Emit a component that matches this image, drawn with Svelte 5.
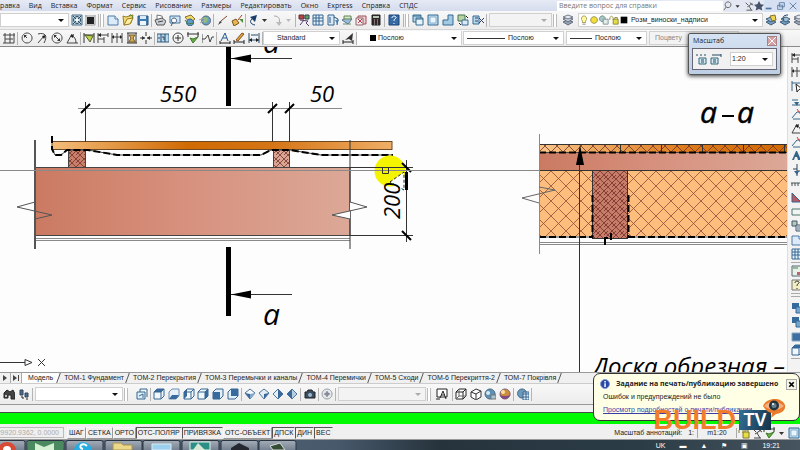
<script lang="ts">
	// each icon is a list of [path, fill, stroke] on a 14x14 grid
	type Shape = [string, string, string?];

	interface Group {
		width: number;
		icons: string[];
		grip?: boolean;
	}

	const cube = 'M2 5l3-3h7v7l-3 3H2z';
	const cubeEdges = 'M2 5h7v7M9 5l3-3';

	const icons: Record<string, Shape[]> = {
		gear: [
			['M2 2h10v10H2z', '#c4dbe8', '#466b84'],
			['M7 3.500a3.500 3.500 0 1 0 .1 0zM3 3l8 8M11 3l-8 8', 'none', '#27475e'],
			['M7 5.500a1.500 1.500 0 1 0 .1 0z', '#fff']
		],
		chip: [
			['M4 4h7v7H4z', '#222'],
			['M2 3h10M2 12h10M3 2v10M12 2v10', 'none', '#999']
		],
		page: [['M2 3h7l3 3v6H2z', '#dcebfa', '#4f7ba8'], ['M9 3v3h3', '#fff', '#4f7ba8']],
		open: [
			['M2 3l3 1 7-2-2 8-7 2z', '#f3dc74', '#9a7c25'],
			['M3 12l3-6 6-1-3 6z', '#fff0a0', '#9a7c25'],
			['M8 3c2-3 3 0 4 2', 'none', '#368344']
		],
		save: [
			['M2 3h10v9H2z', '#3f7cb4', '#29547f'],
			['M4 3h6v3H4z', '#d9eafa'],
			['M4 8h6v4H4z', '#eef5fb']
		],
		print: [
			['M4 2l5 1 1 4H4z', '#fff', '#777'],
			['M2 7l7-2 4 3-2 4H4z', '#cbd0d6', '#555'],
			['M5 9l5-1', 'none', '#444']
		],
		preview: [
			['M2 3h10v7H2z', '#cfe3f5', '#49759e'],
			['M6 5a2.500 2.500 0 1 0 .1 0zM5 9l-2 4', '#fff', '#3d5870']
		],
		publish: [
			['M2 4l6-2 4 4-5 4z', '#f0d86b', '#876f29'],
			['M7 6a3.500 3.500 0 1 0 .1 0z', '#5b9bd0', '#2b5980'],
			['M2 7l3 4 6-1', 'none', '#4d7d31']
		],
		globe: [
			['M8 3a4.500 4.500 0 1 0 .1 0z', '#6c9ec0', '#50687c'],
			['M6 4l4 1-1 4-3 1z', '#91bd78'],
			['M1 7l5-2M2 10l5-3', 'none', '#aaa']
		],
		brush: [['M3 12l2-4 2 1z', '#333'], ['M6 8l6-5', 'none', '#83462c']],
		match: [
			['M2 8l4-2 3 4-5 3z', '#e9b64e', '#78541c'],
			['M8 7l4-5', 'none', '#a33e2a'],
			['M9 6h4v4z', '#4f8e3b']
		],
		undo: [['M9 12C4 11 3 8 7 5', 'none', '#183c6b'], ['M4 4l7-2-2 7z', '#183c6b']],
		redo: [['M4 3c6 0 6 4 5 8', 'none', '#aaa'], ['M6 9h6l-3 4z', '#bbb']],
		caret: [['M4 6h5L6.500 9z', '#333']],
		caretOff: [['M4 6h5L6.500 9z', '#bbb']],
		palette: [
			['M2 2h5v4H2z', '#b84545', '#5d3030'],
			['M8 2h4v4H8z', '#5aa05e', '#345'],
			['M3 7l8 1-2 2 3 3M3 12l4-5', 'none', '#573d72']
		],
		table: [
			['M2 2h10v10H2z', '#e4f1fb', '#376791'],
			['M2 5h10M2 8h10M5 2v10M8 2v10', 'none', '#376791']
		],
		tool: [
			['M2 2h6v10H2z', '#d8e9f7', '#376791'],
			['M4 4v6M8 4l4 2-1 6', 'none', '#2b527d'],
			['M9 7h4l-2 4z', '#4c86b8']
		],
		sheets: [
			['M2 7l6-3 4 2-4 5z', '#9dbdd6', '#567893'],
			['M4 3h7v3H4z', '#d5e8c6', '#64815a'],
			['M3 11h8', 'none', '#698a73']
		],
		markup: [
			['M4 3h8v8H4z', '#ead1d4', '#a44c56'],
			['M2 5h7v7H2z', '#f3e7e8', '#8c6870'],
			['M4 6l4 4M8 6l-4 4', 'none', '#c23d48']
		],
		calc: [
			['M3 2h8v10H3z', '#302829', '#222'],
			['M4 3h6v2H4z', '#b9c5b5'],
			['M5 7h1M8 7h1M5 9h1M8 9h1M5 11h1M8 11h1', 'none', '#d9bebe']
		],
		help: [
			['M2 2h10v10H2z', '#366ca5', '#1c4375'],
			['M5 5c0-3 5-2 4 0-1 1-2 1-2 3M7 10v1', 'none', '#fff']
		],
		vp1: [
			['M2 2h8v7H2z', '#b7d6ea', '#376b90'],
			['M5 5h7v7H5z', '#e6f3fb', '#376b90'],
			['M2 3h8M5 6h7', 'none', '#376b90']
		],
		vp2: [['M2 2h10v10H2z', '#b9d9ed', '#376b90'], ['M4 4h6v6H4z', '#eaf6fd', '#8cb4cf']],
		vp3: [['M7 2h5v10H2V7h5z', '#a2cae4', '#376b90']],
		vp4: [
			['M2 2h7v6H2z', '#b8d4a2', '#47734f'],
			['M6 7h6v5H6z', '#d9eaf7', '#376b90'],
			['M10 3l2 2M3 10l2 2', 'none', '#222']
		],
		vp5: [
			['M2 3h6v8H2z', '#b9d9ed', '#376b90'],
			['M8 5l5 5M13 5l-5 5M4 5h3M4 8h3', 'none', '#343e61']
		],
		layers: [
			['M2 9l5-2 5 2-5 3z', '#9ba5b5', '#606a7a'],
			['M2 6l5-2 5 2-5 3z', '#c5ccd8', '#606a7a'],
			['M2 4l5-2 5 2-5 2z', '#e4e7ef', '#747d8c']
		],
		layers2: [
			['M2 9l5-2 5 2-5 3z', '#739ec2', '#405e7b'],
			['M2 6l5-2 5 2-5 3z', '#8db7d6', '#405e7b'],
			['M6 3l5-1 1 5-4 1z', '#edd253', '#82712e']
		],
		layers3: [
			['M2 9l5-2 5 2-5 3z', '#6c9aba', '#405e7b'],
			['M3 6l5-2 4 2-4 3z', '#a1c1d7', '#405e7b'],
			['M10 2c-5 0-6 3-4 5', 'none', '#173f70']
		],
		bulb: [['M7 2a3.500 3.500 0 0 0-2 6v2h4V8a3.500 3.500 0 0 0-2-6z', '#fff9a5', '#9a954d'], ['M5 12h4', 'none', '#777']],
		sun: [['M7 3a4 4 0 1 0 .1 0z', '#f2df3c', '#8b823c']],
		freeze: [['M5 2a3.500 3.500 0 1 0 .1 0z', '#a9c6c4', '#688984'], ['M6 6h6v6H6z', '#e5eceb', '#718b86']],
		lock: [['M6 6h6v6H6z', '#e5dd44', '#80792d'], ['M2 7V4q2-3 4 0v3M8 6V4h3v2', 'none', '#8a822f']],
		black: [['M3 3h8v8H3z', '#000']],
		scaleA: [
			['M4 6h7v6H4z', '#d7eaf1', '#35697f'],
			['M1 3h2M5 3h2M9 3h2M6 8h3M6 10h3', 'none', '#254b60']
		],
		scaleB: [
			['M2 6h7v6H2z', '#d7eaf1', '#35697f'],
			['M3 3h9M12 2v3M4 8h3M4 10h3', 'none', '#254b60']
		],
		dimGrid: [['M1 4h12M3 2v10M8 2v10M12 2v10M3 8h8M1 12h11', 'none', '#444']],
		radius: [['M7 2a5 5 0 1 0 .1 0zM7 7L4 4', 'none', '#444'], ['M4 4h3L4 7z', '#333']],
		arc: [['M3 3c7-2 10 2 6 9M3 12l6-7', 'none', '#444'], ['M7 5l4-1-2 4z', '#222']],
		diam: [['M7 2a5 5 0 1 0 .1 0zM4 4l6 6', 'none', '#444'], ['M4 4h3L4 7zM10 10H7l3-3z', '#333']],
		angle: [['M2 12h11M2 12l5-9M6 4q5 2 5 8', 'none', '#444'], ['M5 5l4-2-1 4z', '#222']],
		quick: [
			['M2 2v10M12 2v10M2 4h10', 'none', '#333'],
			['M3 4l8 1-3 6z', '#c2d14b', '#4c6329']
		],
		base: [['M2 2v10M2 4h10M2 8h6M8 6v6M12 2v4', 'none', '#444'], ['M2 4l3-2v4z', '#222']],
		cont: [['M2 2v10M7 2v10M12 2v10M2 6h10', 'none', '#444'], ['M2 6l2-2v4zM12 6l-2-2v4z', '#222']],
		space: [
			['M2 2h10M2 12h10M3 2v10M11 2v10', 'none', '#333'],
			['M4 4h6l-2 3 2 4H4l2-4z', '#d5ad58', '#755422']
		],
		brk: [['M1 7h5M8 7h5M7 1v4M7 9v4', 'none', '#333'], ['M3 5v4l3-2zM11 5v4L8 7z', '#333']],
		tol: [['M1 3h12v8H1z', '#bddaec', '#335f80'], ['M5 3v8M9 3v8M2 7h2M6 6h2v3', 'none', '#254b69']],
		center: [['M7 2a5 5 0 1 0 .1 0zM4 7h6M7 4v6', 'none', '#333']],
		inspect: [['M1 3h12M2 1v5M12 1v5', 'none', '#333'], ['M4 7l3 5 5-6-5 2z', '#69ae42', '#3e7a2b']],
		jog: [['M1 3v9M1 8h3l3-4 2 7 2-5h2', 'none', '#444']],
		dimText: [['M2 12h10M2 10v4M12 10v4', 'none', '#222'], ['M3 10l4-8 3 8M5 7h4', 'none', '#245a91']],
		dimEdit: [['M2 11h10M2 9v4M12 9v4', 'none', '#222'], ['M4 9l6-7 2 1-6 7z', '#d5a642', '#92501b']],
		dimUpd: [['M2 2v10M12 2v10M2 9h10M4 4h7', 'none', '#274d6d'], ['M2 9l3-2v4zM12 9L9 7v4z', '#222']],
		dimPick: [['M2 2v10M2 4h10M12 2v4', 'none', '#32668a'], ['M6 5l6 5-3 .5L7 13z', '#fff', '#222']],
		style: [['M2 11h10M2 9v4M12 9v4', 'none', '#222'], ['M4 9l8-7-1 8-3-2z', '#333']],
		binoc: [['M2 11V6l3-3 3 2 3-2 2 4v5H9V8H6v3z', '#444', '#222'], ['M3 8h2v2H3z', '#bbb']],
		steps: [['M3 3h3v5H3zM8 6h3v4H8z', '#456f91', '#345'], ['M4 10h2v2M9 12h2', 'none', '#222']],
		named: [['M2 5h8v7H2z', '#dfeef9', '#376791'], ['M5 2h7v8M5 5V2M4 9l4-2v4', 'none', '#376791']],
		top: [[cube, '#f1f7fc', '#376791'], ['M2 5l3-3h7L9 5z', '#376b9d'], [cubeEdges, 'none', '#376791']],
		bottom: [[cube, '#e6f0f8', '#6f8fae'], ['M2 12l3-4h7l-3 4z', '#376b9d']],
		left: [[cube, '#f1f7fc', '#376791'], ['M2 5l3-3v7l-3 3z', '#376b9d'], [cubeEdges, 'none', '#376791']],
		right: [[cube, '#f1f7fc', '#376791'], ['M9 5l3-3v7l-3 3z', '#376b9d'], [cubeEdges, 'none', '#376791']],
		front: [[cube, '#e4f0f9', '#376791'], ['M2 5h7v7H2z', '#376b9d']],
		back: [[cube, '#e4f0f9', '#376791'], ['M5 2h7v7H5z', '#376b9d']],
		iso1: [['M7 2l5 4-5 6-5-6z', '#f4f8fc', '#527798'], ['M2 6l5 1v5z', '#39699a'], ['M7 7l5-1-5 6z', '#84a9c9']],
		iso2: [['M7 2l5 4-5 6-5-6z', '#e4eef7', '#527798'], ['M7 7l5-1-5 6z', '#39699a']],
		iso3: [['M7 2l5 5-5 5-5-5z', '#e4eef7', '#527798'], ['M7 2l5 5-5 5z', '#39699a']],
		iso4: [['M7 2l5 5-5 5-5-5z', '#b4cde2', '#527798'], ['M7 2L2 7l5 5z', '#39699a']],
		camera: [['M2 5h2l1-2h4l1 2h2v6H2z', '#384e65', '#222'], ['M7 6a2 2 0 1 0 .1 0z', '#9fb6c8']],
		orbit: [['M7 2a5 5 0 1 0 .1 0z', '#e5e9ec', '#929ca3'], ['M4 7h6M7 4v6', 'none', '#667'], ['M7 5a2 2 0 1 0 .1 0z', '#889']],
		wire2d: [['M2 2h10v8H2z', '#fff', '#222'], ['M5 11l3-7 3 8M6 8h4M1 12h4', 'none', '#222']],
		wire: [[cube, '#fff', '#222'], [cubeEdges, 'none', '#222'], ['M2 12l3-3h7M5 9V2', 'none', '#666']],
		hidden: [['M2 5l5-3 5 2v6l-5 3-5-3z', '#fff', '#333'], ['M2 5l5 2v5M7 7l5-3', 'none', '#333']],
		real: [['M7 2a5 5 0 1 0 .1 0z', '#5f91b5', '#426782'], ['M5 4a2 2 0 1 0 .1 0z', '#d5e9f4'], ['M8 8h5v4H8z', '#a9c4d3', '#777']],
		ball: [['M7 2a5 5 0 1 0 .1 0z', '#ce8e3d', '#785b73'], ['M2 8q5 2 10 0-2 4-5 4-4 0-5-4z', '#824a83'], ['M5 3a2 2 0 1 0 .1 0z', '#ffe0a0']],
		vstyle: [['M6 2a4.500 4.500 0 1 0 .1 0z', '#6b9abc', '#426782'], ['M7 5h6v8H7z', '#e1edf6', '#376791'], ['M7 7h6M7 10h6M10 5v8', 'none', '#376791']],
		find: [['M7 2a3.500 3.500 0 1 0 .1 0zM5 8l-3 4', 'none', '#555']],
		sat: [['M3 3l3 3M8 3l4 3M5 8l6-4M7 7l3 5M4 12h7', 'none', '#444']],
		star: [['M7 1l2 4 4 .5-3 3 1 4-4-2-4 2 1-4-3-3L5 5z', '#46536a']],
		min: [['M3 9h7v2H3z', '#53749b']],
		restore: [['M5 3h6v5H5zM3 6h6v5H3z', 'none', '#53749b']],
		close: [['M3 3l8 8M11 3l-8 8', 'none', '#53749b']],
		leader: [['M2 12h9M11 12V3M2 7h6', 'none', '#32668a'], ['M4 9h5l-2 4z', '#32668a']],
		red: [['M2 11l5-6h5M3 12h8', 'none', '#32668a'], ['M7 2l4 6', 'none', '#cc4040']],
		letter: [['M2 11l4-9h1l4 9H8L7 8H5l-1 3z', '#346488'], ['M10 12h3', 'none', '#222']],
		pin: [['M7 1v12M3 6h4M7 8h4', 'none', '#345'], ['M4 8h5l-2 4z', '#346488']],
		ruler: [['M1 6h12M2 6v3M5 6v3M8 6v3M11 6v3', 'none', '#455']],
		wedge: [['M2 2l9 9H2z', '#ba5966', '#346488']],
		rect: [['M2 4h11v6H2z', '#f0f5f4', '#4c776d']],
		shapes: [['M2 2h5v5H2z', '#b3c9bc', '#456'], ['M6 6h7v6H6z', '#d9e8ef', '#456'], ['M7 8h5M7 10h5', 'none', '#678']],
		note: [['M2 2h10v10H2z', '#e8f0e7', '#567'], ['M3 4h5', 'none', '#3d8550'], ['M7 8h5v3H7z', '#b46673']],
		ask: [['M2 2h10v10H2z', '#f3efc4', '#777'], ['M5 5c0-3 5-2 4 0-1 1-2 1-2 3M7 10v1', 'none', '#333']],
		order: [['M2 2h7v6H2z', '#356b9b'], ['M6 6h7v6H6z', '#77a4ca', '#356b9b']],
		order2: [['M2 4h10v8H2z', '#3d6fa3', '#88a6c0']]
	};

	const menu = ['Правка', 'Вид', 'Вставка', 'Формат', 'Сервис', 'Рисование', 'Размеры', 'Редактировать', 'Окно', 'Express', 'Справка', 'СПДС'];

	const standard: Group[] = [
		{ width: 30, icons: ['gear', 'chip'] },
		{ width: 53, icons: ['page', 'open', 'save'], grip: true },
		{ width: 62, icons: ['print', 'preview', 'publish', 'globe'] },
		{ width: 32, icons: ['brush', 'match'] },
		{ width: 50, icons: ['undo', 'caret', 'redo', 'caretOff'] },
		{ width: 89, icons: ['palette', 'table', 'tool', 'sheets', 'markup', 'calc'] },
		{ width: 19, icons: ['help'] },
		{ width: 83, icons: ['vp1', 'vp2', 'vp3', 'vp4', 'vp5'], grip: true }
	];

	const dims: Group[] = [
		{ width: 18, icons: ['dimGrid'] },
		{ width: 63, icons: ['radius', 'arc', 'diam', 'angle'] },
		{ width: 74, icons: ['quick', 'base', 'cont', 'space', 'brk'] },
		{ width: 62, icons: ['tol', 'center', 'inspect', 'jog'] },
		{ width: 46, icons: ['dimText', 'dimEdit', 'dimUpd'] }
	];

	const views: Group[] = [
		{ width: 18, icons: ['named'] },
		{ width: 91, icons: ['top', 'bottom', 'left', 'right', 'front', 'back'] },
		{ width: 59, icons: ['iso1', 'iso2', 'iso3', 'iso4'] },
		{ width: 18, icons: ['camera'] },
		{ width: 17, icons: ['orbit'] }
	];

	const visual: Group[] = [
		{ width: 27, icons: ['wire2d'], grip: true },
		{ width: 61, icons: ['wire', 'hidden', 'real', 'ball'] },
		{ width: 18, icons: ['vstyle'] }
	];

	const rail = [
		['base', 'cont', 'dimPick', 'leader', 'red', 'angle', 'red', 'letter', 'pin', 'ruler', 'wedge', 'rect', 'shapes', 'page', 'table'],
		['note', 'ask'],
		['order', 'order', 'order2', 'top']
	];

	const sheets = ['Модель', 'ТОМ-1 Фундамент', 'ТОМ-2 Перекрытия', 'ТОМ-3 Перемычки и каналы', 'ТОМ-4 Перемички', 'ТОМ-5 Сходи', 'ТОМ-6 Перекриття-2', 'ТОМ-7 Покрівля'];

	let modes = $state([
		{ name: 'ШАГ', on: false },
		{ name: 'СЕТКА', on: false },
		{ name: 'ОРТО', on: false },
		{ name: 'ОТС-ПОЛЯР', on: true },
		{ name: 'ПРИВЯЗКА', on: true },
		{ name: 'ОТС-ОБЪЕКТ', on: false },
		{ name: 'ДПСК', on: true },
		{ name: 'ДИН', on: true },
		{ name: 'ВЕС', on: true }
	]);

	let sheet = $state('Модель');
</script>

{#snippet icon(name: string)}
	<svg class="icon" viewBox="1 1 12 12" aria-hidden="true">
		{#each icons[name] as [d, fill, stroke]}
			<path {d} {fill} stroke={stroke ?? 'none'} />
		{/each}
	</svg>
{/snippet}

{#snippet group(g: Group)}
	<div class={['group', g.grip && 'grip']} style:width="{g.width}px">
		{#each g.icons as name}
			<button class="tool" aria-label={name}>{@render icon(name)}</button>
		{/each}
	</div>
{/snippet}

<div class="app">
	<nav class="menubar">
		<div class="menu">
			{#each menu as item}
				<button>{item}</button>
			{/each}
		</div>
		<input class="ask" aria-label="Справка" placeholder="Введите вопрос для справки" />
		<div class="menu-tools">
			{#each ['find', 'caret', 'sat', 'star'] as name}
				<button class="tool" aria-label={name}>{@render icon(name)}</button>
			{/each}
		</div>
		<div class="win-tools">
			{#each ['min', 'restore', 'close'] as name}
				<button class="tool" aria-label={name}>{@render icon(name)}</button>
			{/each}
		</div>
	</nav>

	<div class="toolbar upper">
		<label class="combo workspace"><select aria-label="Рабочее пространство"><option></option></select></label>
		{#each standard as g}
			{@render group(g)}
		{/each}
		<label class="combo off view"><select aria-label="Вид" disabled><option></option></select></label>
		<div class="group grip layer-btn">
			<button class="tool" aria-label="Слои">{@render icon('layers')}</button>
		</div>
		<label class="combo layer">
			{#each ['bulb', 'sun', 'freeze', 'lock', 'black'] as name}
				{@render icon(name)}
			{/each}
			<select aria-label="Слой"><option>Розм_виноски_надписи</option></select>
		</label>
		<div class="group last">
			{#each ['layers2', 'layers3', 'layers'] as name}
				<button class="tool" aria-label={name}>{@render icon(name)}</button>
			{/each}
		</div>
	</div>

	<div class="toolbar lower">
		{#each dims as g}
			{@render group(g)}
		{/each}
		<label class="combo dimstyle"><select aria-label="Размерный стиль"><option>Standard</option></select></label>
		<div class="group style-btn"><button class="tool" aria-label="Стиль">{@render icon('style')}</button></div>
		<label class="combo grip color">
			<span class="swatch"></span>
			<select aria-label="Цвет"><option>Послою</option></select>
		</label>
		<label class="combo linetype">
			<span class="line long"></span>
			<select aria-label="Тип линии"><option>Послою</option></select>
		</label>
		<label class="combo weight">
			<span class="line"></span>
			<select aria-label="Вес линии"><option>Послою</option></select>
		</label>
		<label class="combo off plot"><select aria-label="Стиль печати" disabled><option>Поцвету</option></select></label>
	</div>

	<main class="work">
		<svg class="drawing" viewBox="0 47 787 325" role="img" aria-label="Чертеж">
			<defs>
				<linearGradient id="board">
					<stop offset="0" stop-color="#f4bd7c" />
					<stop offset="0.4" stop-color="#d06a03" />
					<stop offset="0.65" stop-color="#d57516" />
					<stop offset="1" stop-color="#efae66" />
				</linearGradient>
				<linearGradient id="cladding">
					<stop offset="0" stop-color="#f8c58a" />
					<stop offset="0.6" stop-color="#dc7a1c" />
					<stop offset="1" stop-color="#d06a03" />
				</linearGradient>
				<linearGradient id="beam">
					<stop offset="0" stop-color="#cb7a62" />
					<stop offset="0.5" stop-color="#d7927f" />
					<stop offset="1" stop-color="#dca897" />
				</linearGradient>
				<pattern id="insul" width="15" height="15" x="551" y="171" patternUnits="userSpaceOnUse">
					<path d="M0 0l15 15M15 0L0 15" stroke="#8d4b36" stroke-width="0.800" />
				</pattern>
				<pattern id="wood" width="8" height="8" x="592" y="171" patternUnits="userSpaceOnUse">
					<path d="M0 0l8 8M8 0L0 8M4 8l4-4" stroke="#743229" stroke-width="0.800" />
				</pattern>
				<pattern id="planks" width="12" height="8" x="539" y="144" patternUnits="userSpaceOnUse">
					<path d="M0 8l8-8M4 0l8 8" stroke="#743229" stroke-width="0.800" />
				</pattern>
			</defs>

			<!-- section marks -->
			<path d="M226 47h5v59h-5zM226 247h5v69h-5z" />
			<path class="thin" d="M231 58.500h61M231 294.500h61" />
			<path d="M231 58.500l20-4v8zM231 294.500l20-4v8z" />
			<text class="mark" x="263" y="53">а</text>
			<text class="mark" x="263" y="325">а</text>

			<!-- roof board and membrane -->
			<rect x="52" y="141.500" width="340" height="8" fill="url(#board)" stroke="#6d4a22" />
			<rect x="68.500" y="149.500" width="17" height="18" fill="#c97e69" />
			<rect x="68.500" y="149.500" width="17" height="18" fill="url(#wood)" stroke="#444" />
			<rect x="273.500" y="149.500" width="16" height="18" fill="#dba595" />
			<rect x="273.500" y="149.500" width="16" height="18" fill="url(#wood)" stroke="#444" />
			<path class="film" d="M52 149l3 6h6l6-5h21l29 5h144l10-5h19l31 5h72" />
			<path class="film-dash" d="M52 136v13l3 6h6l6-5h21l29 5h144l10-5h19l31 5h72" />

			<!-- beam -->
			<rect x="35" y="167.500" width="315" height="68" fill="url(#beam)" stroke="#444" />
			<path class="soft" d="M35 238.500h315M35 240.500h315" />
			<path class="soft wide" d="M35 140v109" />
			<path class="thin" d="M350 140v109" />
			<path class="break" fill="none" d="M35 202l-18 5 35 8-17 4" />
			<path class="break" fill="#fff" d="M350 202l17 5-35 8 18 4" />

			<!-- dimensions -->
			<path class="soft" d="M78 108.500h264" />
			<path class="thin" d="M85.500 102v40M272.500 102v40M289.500 102v40" />
			<path class="tick" d="M81 113l9-9M268 113l9-9M285 113l9-9" />
			<text x="160" y="102">550</text>
			<text x="310" y="102">50</text>

			<circle cx="390" cy="171" r="15.500" fill="#f4f400" />
			<path class="thin" d="M350 167.500h63M350 235.500h63M406.500 160v82" />
			<path class="tick" d="M402 163l9 9M402 231l9 9" />
			<path d="M405 172h3v18h-3z" />
			<path d="M390 182l14-10v18z" fill="#fff" stroke="#222" stroke-dasharray="3 2" />
			<text transform="translate(400 219) rotate(-90)">200</text>

			<!-- section a-a -->
			<text class="mark bold" x="700" y="123">а</text>
			<path d="M722 115h12v2h-12z" />
			<text class="mark bold" x="737" y="123">а</text>
			<rect x="539" y="144" width="248" height="8" fill="url(#cladding)" />
			<rect x="539" y="144" width="248" height="8" fill="url(#planks)" />
			<rect x="539" y="153" width="248" height="18" fill="url(#beam)" />
			<rect x="539" y="171" width="248" height="65" fill="#fdbd7c" />
			<rect x="539" y="171" width="248" height="65" fill="url(#insul)" />
			<rect x="592.500" y="170.500" width="35" height="68" fill="#c77c69" />
			<rect x="592.500" y="170.500" width="35" height="68" fill="url(#wood)" stroke="#333" />
			<path class="thin" d="M539 144.500h248M539 170.500h248M620.500 144v8M661.500 144v8M702.500 144v8M743.500 144v8M784.500 144v8" />
			<path class="film" d="M539 152.500h248M539 237h54M628 237h159" />
			<path class="film-dash" d="M539 152.500h248M539 237h54M628 237h159M592.500 195v43M628.500 195v43" />
			<path class="soft" d="M539 242.500h248M539 244.500h248M539.500 134v120" />
			<path class="hair" d="M539 187l16 3-33 8 17 5" fill="none" />
			<path class="tick" d="M605 237v8M604 238h4M611 233v7" />
			<path class="thin" d="M579.500 160v212" />
			<path d="M580 145l4 20h-8z" />
			<text class="note" x="593" y="375">Доска обрезная –</text>

			<!-- crosshair and ucs -->
			<path class="soft" d="M0 170.500h539" />
			<path class="thin" fill="none" d="M382.500 167.500h6v6h-6zM0 362.500h25M25 359.500v6l7-3zM38 359l7 7M45 359l-7 7" />
		</svg>
		<aside class="rail">
			{#each rail as part}
				<div class="rail-group">
					{#each part as name}
						<button class="tool" aria-label={name}>{@render icon(name)}</button>
					{/each}
				</div>
			{/each}
		</aside>
	</main>

	<div class="sheets">
		<button class="step" aria-label="Вперед"><svg viewBox="0 0 8 8"><path d="M2 1l4 3-4 3z" /></svg></button>
		<button class="step" aria-label="В конец"><svg viewBox="0 0 8 8"><path d="M1 1l4 3-4 3zM6 1h1v6H6z" /></svg></button>
		{#each sheets as name}
			<button class={['sheet', sheet === name && 'active']} onclick={() => (sheet = name)}>{name}</button>
		{/each}
	</div>

	<div class="toolbar bottom">
		<div class="group walk">
			<button class="tool" aria-label="Обзор">{@render icon('binoc')}</button>
			<button class="tool" aria-label="Обход">{@render icon('steps')}</button>
		</div>
		<label class="combo named"><select aria-label="Именованный вид"><option></option></select></label>
		<div class="group grip empty"></div>
		{#each views as g}
			{@render group(g)}
		{/each}
		<label class="combo off camera"><select aria-label="Камера" disabled><option></option></select></label>
		{#each visual as g}
			{@render group(g)}
		{/each}
	</div>

	<div class="command"></div>

	<footer class="status">
		<output class="coords">29920.9362, 0.0000</output>
		{#each modes as mode}
			<button class={['mode', mode.on && 'on']} onclick={() => (mode.on = !mode.on)}>{mode.name}</button>
		{/each}
		<span class="scale-label">Масштаб аннотаций: &nbsp; 1:</span>
		<button class="scale">m1:20</button>
		<div class="tray">
			{#each ['lock', 'sat', 'inspect', 'caret', 'vp2'] as name}
				<button class="tool" aria-label={name}>{@render icon(name)}</button>
			{/each}
		</div>
	</footer>

	<div class="taskbar">
		<svg class="tasks" viewBox="0 0 297 10" aria-hidden="true">
			<defs>
				<linearGradient id="task" x2="0" y2="1">
					<stop offset="0" stop-color="#a4adb8" />
					<stop offset="1" stop-color="#6b7888" />
				</linearGradient>
			</defs>
			{#each [-12, 27, 66, 105, 143, 182, 221, 259] as x}
				<rect {x} y="0.500" width="37" height="12" rx="2" fill="url(#task)" stroke="#2a3440" />
			{/each}
			<rect x="28" y="1" width="35" height="9" fill="#4b8a61" />
			<path d="M-2 10a9 8 0 0 1 18 0z" fill="#d64a36" />
			<path d="M3 10a4 4 0 0 1 8 0z" fill="#fff" />
			<path d="M35 3l9 4 10-4v7H35z" fill="#d5f0d3" />
			<circle cx="83" cy="11" r="9" fill="#22aee4" />
			<path d="M87 6q-3-3-6-1-2 3 2 4" fill="none" stroke="#fff" stroke-width="2" />
			<path d="M113 3h8l2 2h9v5h-19z" fill="#ecd889" stroke="#a99451" />
			<path d="M152 4h19v6h-19z" fill="#9bd0ef" stroke="#dcebf3" />
			<path d="M190 2h20v8h-20z" fill="#2a9087" stroke="#e5efe9" />
			<path d="M198 3l-5 7h12z" fill="#d7e6d5" />
			<path d="M231 8l8-5 10 5v2h-18z" fill="#25292f" />
			<path d="M270 6l10-3 5 7h-12z" fill="#354c37" stroke="#dadada" />
		</svg>
		<div class="clock"><span>UK</span><span>▬</span><span>▲</span><span>⚑</span><span>▣</span><time>19:21</time></div>
	</div>

	<section class="palette">
		<header>Масштаб<button aria-label="Закрыть"></button></header>
		<div class="palette-body">
			<button class="tool" aria-label="Масштаб A">{@render icon('scaleA')}</button>
			<button class="tool" aria-label="Масштаб B">{@render icon('scaleB')}</button>
			<label class="combo"><select aria-label="Масштаб"><option>1:20</option></select></label>
		</div>
	</section>

	<section class="balloon">
		<svg class="info" viewBox="0 0 10 10" aria-hidden="true">
			<circle cx="5" cy="5" r="4.500" fill="#2848a8" stroke="#8a9bd0" />
			<path d="M4.300 2h1.500v1.500H4.300zM4.300 4.200h1.500V8H4.300z" fill="#fff" />
		</svg>
		<div class="message">
			<strong>Задание на печать/публикацию завершено</strong>
			<p>Ошибок и предупреждений не было</p>
			<a href="#report">Просмотр подробностей о печати/публикации</a>
		</div>
		<button class="dismiss" aria-label="Закрыть">
			<svg viewBox="0 0 8 8"><path d="M2 2l4 4M6 2L2 6" stroke="#000" stroke-width="1.500" /></svg>
		</button>
	</section>

	<div class="brand">
		<span class="build">BUILD</span>
		<span class="tv">TV</span>
		<svg class="eye" viewBox="0 0 24 22" aria-hidden="true">
			<path d="M1 9C4 1 19-1 23 8c1 6-4 8-9 9l-5 4 1-5C5 15 3 12 1 9z" fill="#ec7a2b" />
			<path d="M2 9q9-9 20 0-9 8-20 0z" fill="#f4b184" />
			<circle cx="12" cy="8.500" r="5" fill="#27343c" />
			<circle cx="12" cy="8.500" r="2.500" fill="#64808c" />
			<circle cx="11" cy="7" r="1" fill="#fff" />
		</svg>
	</div>
</div>

<style>
	:global(body) {
		overflow: hidden;
		background: #f0f0f0;
	}

	.app {
		position: relative;
		overflow: hidden;
		font: 7px/10px 'Liberation Sans', Arial, sans-serif;
		color: #222;
		background: #f0f0f0;
	}

	button,
	select,
	input {
		margin: 0;
		padding: 0;
		border: 0;
		border-radius: 0;
		font: inherit;
		color: inherit;
		background: none;
	}

	.icon {
		display: block;
		flex: none;
		width: 12px;
		height: 12px;
	}

	.tool {
		flex: none;
		width: 12px;
		height: 12px;
	}

	.menubar {
		display: flex;
		align-items: center;
		height: 11px;
		background: linear-gradient(#e6eaf5, #d5dcee);
	}

	.menu {
		display: flex;
		flex: 1;
		gap: 9px;
		margin-left: -5px;
		font-family: 'Open Sans', sans-serif;
		color: #222;
	}

	.menu button {
		flex: none;
		line-height: 10px;
	}

	.ask {
		width: 164px;
		height: 10px;
		padding-left: 2px;
		font-family: 'Open Sans', sans-serif;
		background: #fff;
	}

	.ask::placeholder {
		color: #777;
		opacity: 1;
	}

	.menu-tools,
	.win-tools {
		display: flex;
		justify-content: space-around;
		width: 41px;
		background: #e4e8f2;
	}

	.menu-tools .tool {
		width: 10px;
	}

	.menu-tools .icon,
	.win-tools .icon {
		width: 10px;
		height: 10px;
	}

	.win-tools {
		width: 36px;
		background: #d5e1f3;
	}

	.toolbar {
		display: flex;
		align-items: center;
		overflow: hidden;
		background: linear-gradient(#f8f8f8, #ececec);
	}

	.toolbar > :global(*) {
		flex: none;
	}

	.upper {
		height: 19px;
		border-bottom: 1px solid #d4d4d4;
		box-sizing: border-box;
	}

	.lower {
		height: 17px;
		border-bottom: 1px solid #8a8a8a;
		box-sizing: border-box;
	}

	.group {
		display: flex;
		align-items: center;
		justify-content: space-around;
		box-sizing: border-box;
		height: 13px;
		padding: 0 1px;
		border-right: 1px solid #b4b4b4;
	}

	.grip {
		padding-left: 6px;
		background: linear-gradient(90deg, transparent 1px, #bbb 1px, #bbb 2px, #fff 2px, #fff 4px, #bbb 4px, #bbb 5px, transparent 5px);
	}

	.combo {
		display: flex;
		align-items: center;
		gap: 1px;
		box-sizing: border-box;
		height: 14px;
		padding: 0 4px 0 3px;
		border: 1px solid #d0d0d0;
		background: #fff;
	}

	.combo select {
		flex: 1;
		min-width: 0;
		height: 12px;
		appearance: none;
		line-height: 12px;
		opacity: 1;
	}

	.combo::after {
		content: '';
		border: 3px solid transparent;
		border-top-color: #111;
		border-bottom: 0;
	}

	.combo.off {
		color: #888;
		background: #f3f3f3;
	}

	.combo.off::after {
		border-top-color: #aaa;
	}

	.workspace {
		width: 69px;
	}

	.view {
		width: 63px;
		margin-left: 2px;
	}

	.layer-btn {
		width: 26px;
		border: 0;
	}

	.layer {
		width: 185px;
		gap: 0;
		padding-left: 0;
	}

	.layer .icon {
		width: 10px;
		height: 10px;
	}

	.layer select {
		padding-left: 2px;
	}

	.last {
		width: 44px;
		border: 0;
	}

	.dimstyle {
		width: 77px;
		padding-left: 13px;
	}

	.style-btn {
		width: 17px;
	}

	.combo.grip.color {
		width: 105px;
		padding-left: 13px;
		border-width: 0 1px 0 0;
		background-color: #fff;
	}

	.swatch {
		width: 6px;
		height: 6px;
		margin-right: 1px;
		background: #000;
	}

	.line {
		width: 22px;
		height: 1px;
		margin-right: 2px;
		background: #333;
	}

	.line.long {
		width: 38px;
	}

	.linetype {
		width: 101px;
		margin-left: 1px;
	}

	.weight {
		width: 81px;
		margin-left: 2px;
	}

	.plot {
		width: 90px;
		margin-left: 2px;
		padding-left: 5px;
	}

	.work {
		display: flex;
	}

	.drawing {
		display: block;
		flex: 1;
		min-width: 0;
		background: #fdfdfd;
		font: italic 22px 'Open Sans', 'Noto Sans', sans-serif;
	}

	.drawing .mark {
		font-size: 30px;
	}

	.drawing .bold {
		stroke: #000;
		stroke-width: 0.500px;
	}

	.drawing .note {
		font-size: 24px;
	}

	.thin {
		stroke: #333;
	}

	.hair {
		stroke: #666;
	}

	.soft {
		stroke: #8a8a8a;
	}

	.wide {
		stroke: #555;
		stroke-width: 2px;
	}

	.tick {
		stroke: #000;
		stroke-width: 2px;
	}

	.break {
		stroke: #555;
		stroke-width: 1px;
	}

	.film {
		fill: none;
		stroke: #444;
		stroke-width: 1px;
	}

	.film-dash {
		fill: none;
		stroke: #000;
		stroke-width: 2px;
		stroke-dasharray: 7 3;
	}

	.rail {
		box-sizing: border-box;
		width: 13px;
		padding: 5px 0 0 3px;
		overflow: hidden;
		border-left: 1px solid #ddd;
		background: #f3f3f3;
	}

	.rail-group {
		display: grid;
		gap: 2px;
		padding-bottom: 2px;
		margin-bottom: 2px;
		border-bottom: 1px solid #aaa;
	}

	.rail-group:last-child {
		padding-top: 5px;
		border-top: 1px solid #aaa;
	}

	.sheets {
		display: flex;
		align-items: center;
		box-sizing: border-box;
		height: 12px;
		border-top: 1px solid #999;
		border-bottom: 1px solid #ccc;
	}

	.step {
		width: 11px;
		height: 10px;
		border-right: 1px solid #aaa;
	}

	.step svg {
		display: block;
		width: 8px;
		height: 8px;
		margin: 0 auto;
		fill: #444;
	}

	.sheet {
		position: relative;
		flex: none;
		height: 10px;
		padding: 0 4px 0 5px;
	}

	.sheet.active {
		padding: 0 6px;
		background: #fdfdfd;
	}

	.sheet::after {
		content: '';
		position: absolute;
		top: 0;
		right: 0;
		height: 10px;
		border-right: 1px solid #555;
		transform: skewX(-20deg);
	}

	.bottom {
		height: 20px;
	}

	.walk {
		width: 33px;
	}

	.named {
		width: 88px;
		margin-left: 2px;
	}

	.empty {
		width: 10px;
		border: 0;
	}

	.camera {
		width: 88px;
		margin-left: 2px;
	}

	.command {
		height: 12px;
		border-top: 1px solid #999;
		background: #00fb00;
		box-shadow: inset 0 7px #f0f0f0, inset 0 8px #4a4a4a;
		padding-top: 7px;
	}

	.status {
		display: flex;
		align-items: center;
		box-sizing: border-box;
		height: 16px;
		padding-top: 2px;
		border-bottom: 1px solid #999;
		white-space: nowrap;
	}

	.coords {
		display: flex;
		justify-content: flex-end;
		box-sizing: border-box;
		width: 64px;
		height: 11px;
		margin-right: 3px;
		padding-right: 4px;
		overflow: hidden;
		border: 1px solid #bbb;
		border-left: 0;
		color: #aaa;
	}

	.mode {
		box-sizing: border-box;
		height: 12px;
		padding: 0 1px;
		border: 1px solid;
		border-color: #f8f8f8 #999 #999 #f8f8f8;
	}

	.mode.on {
		border-color: #555 #eee #eee #555;
	}

	.scale-label {
		margin-left: auto;
	}

	.scale {
		width: 40px;
		margin-left: 3px;
		border-left: 1px solid #aaa;
		border-right: 1px solid #aaa;
	}

	.tray {
		display: flex;
		justify-content: space-between;
		width: 62px;
		margin-left: 1px;
	}

	.taskbar {
		display: flex;
		justify-content: space-between;
		height: 10px;
		overflow: hidden;
		background: linear-gradient(90deg, #5f6d7b 0, #48596c 42%, #26333c 55%, #2b3c47 80%, #46545f);
	}

	.tasks {
		width: 297px;
		height: 10px;
	}

	.clock {
		display: flex;
		gap: 14px;
		padding: 1px 20px 0 0;
		line-height: 9px;
		color: #fff;
	}

	.palette {
		position: absolute;
		top: 33px;
		right: 19px;
		box-sizing: border-box;
		width: 93px;
		padding: 0 3px 4px;
		border: 1px solid #555;
		border-radius: 2px;
		background: linear-gradient(#d6e3f3, #bdcfe4);
		box-shadow: 0 1px 4px #333;
	}

	.palette header {
		display: flex;
		align-items: center;
		justify-content: space-between;
		height: 14px;
		padding-left: 1px;
		font-family: 'Open Sans', sans-serif;
	}

	.palette header button {
		box-sizing: border-box;
		width: 10px;
		height: 10px;
		border: 1px solid #ad8183;
		background:
			linear-gradient(45deg, transparent 44%, #fff 44%, #fff 56%, transparent 56%),
			linear-gradient(-45deg, #d4a1a2 44%, #fff 44%, #fff 56%, #d4a1a2 56%);
	}

	.palette-body {
		display: flex;
		align-items: center;
		gap: 2px;
		height: 20px;
		padding: 0 3px;
		border: 1px solid #667;
		background: #f1f1f1;
	}

	.palette-body .combo {
		flex: 1;
		margin-left: 6px;
		padding-left: 1px;
	}

	.balloon {
		position: absolute;
		top: 373px;
		right: 0;
		display: flex;
		box-sizing: border-box;
		width: 207px;
		height: 48px;
		padding: 5px 2px 0 6px;
		border: 1px solid #333;
		border-radius: 7px;
		background: #ffffe5;
	}

	.info {
		width: 10px;
		height: 10px;
	}

	.message {
		display: grid;
		flex: 1;
		align-content: start;
		gap: 3px;
		white-space: nowrap;
	}

	.message strong {
		padding-left: 6px;
		font-family: 'Open Sans', sans-serif;
	}

	.message p {
		margin: 0 0 0 -7px;
	}

	.message a {
		margin-left: -7px;
		color: #3d3da8;
	}

	.dismiss {
		width: 11px;
		height: 11px;
		border: 1px solid #aaa;
		background: #f5f5e8;
	}

	.dismiss svg {
		display: block;
	}

	.brand {
		position: absolute;
		top: 407px;
		right: 29px;
		display: flex;
		align-items: center;
		gap: 3px;
	}

	.build {
		font: bold 27px/26px 'Liberation Sans', Arial, sans-serif;
		color: #f07c2c;
	}

	.tv {
		width: 32px;
		background: linear-gradient(110deg, #347097, #153247);
		font: bold 18px/20px 'Liberation Sans', Arial, sans-serif;
		text-align: center;
		color: #fff;
	}

	.eye {
		position: absolute;
		top: -10px;
		right: -15px;
		width: 24px;
		height: 22px;
	}
</style>
